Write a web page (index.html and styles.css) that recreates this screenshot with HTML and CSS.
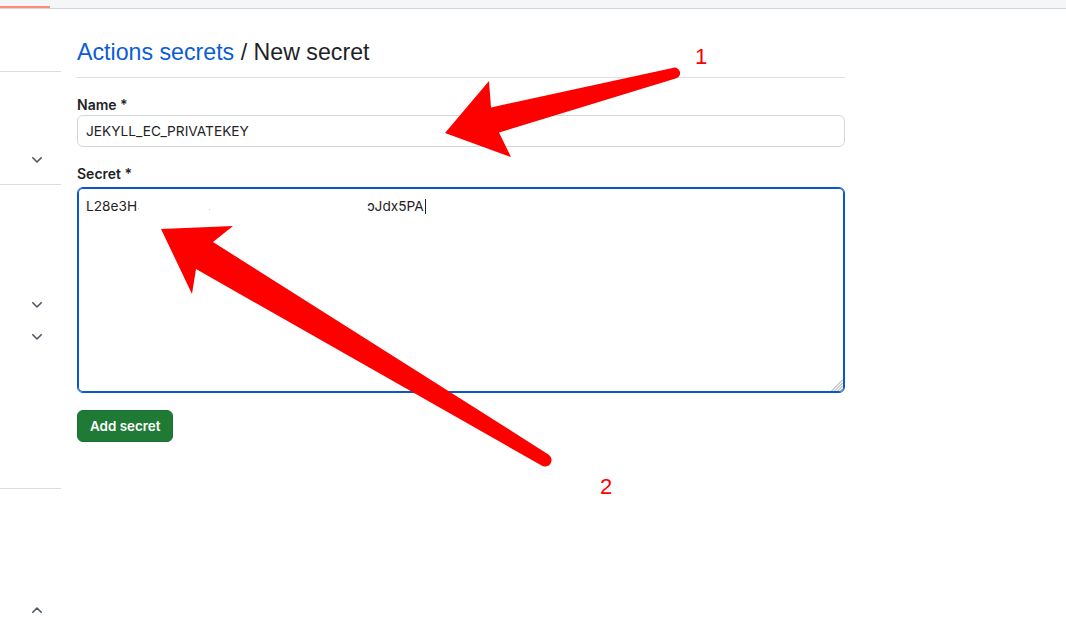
FILE: index.html
```html
<!DOCTYPE html>
<html lang="en">
<head>
<meta charset="utf-8">
<title>Actions secrets / New secret</title>
<link rel="stylesheet" href="styles.css">
</head>
<body>
<header class="topbar"><span class="tab-underline"></span></header>
<div class="layout">
  <nav class="sidebar">
    <div class="side-section side-a"></div>
    <div class="side-section side-b">
      <div class="side-row"><svg class="chev" width="10" height="6" viewBox="0 0 10 6"><path d="M0.8 0.8 L5 5 L9.2 0.8" /></svg></div>
    </div>
    <div class="side-section side-c">
      <div class="side-row"><svg class="chev" width="10" height="6" viewBox="0 0 10 6"><path d="M0.8 0.8 L5 5 L9.2 0.8" /></svg></div>
      <div class="side-row"><svg class="chev" width="10" height="6" viewBox="0 0 10 6"><path d="M0.8 0.8 L5 5 L9.2 0.8" /></svg></div>
    </div>
    <div class="side-section side-d">
      <div class="side-row"><svg class="chev" width="10" height="6" viewBox="0 0 10 6"><path d="M0.8 5.2 L5 1 L9.2 5.2" /></svg></div>
    </div>
  </nav>
  <main class="main">
    <h2 class="page-title"><a href="#" class="crumb">Actions secrets</a> / New secret</h2>
    <form class="secret-form">
      <div class="form-group group-name">
        <label class="form-label" for="secret-name">Name *</label>
        <input id="secret-name" class="form-input" type="text" value="JEKYLL_EC_PRIVATEKEY">
      </div>
      <div class="form-group group-secret">
        <label class="form-label">Secret *</label>
        <div class="form-textarea">
          <span class="secret-part">L28e3H</span><span class="redacted"><i class="speck"></i><i class="speck speck-2"></i></span><span class="secret-part">ɔJdx5PA</span><span class="caret"></span>
          <svg class="grip" width="12" height="12" viewBox="0 0 12 12"><path d="M0.5 12 L12 0.5 M3.5 12 L12 3.5 M6.5 12 L12 6.5 M9.5 12 L12 9.5" /></svg>
        </div>
      </div>
      <button class="btn-primary" type="button">Add secret</button>
    </form>
  </main>
</div>
<svg class="annotations" width="1066" height="617" viewBox="0 0 1066 617">
  <path class="arrow" d="M445 133 L489 81 L491 107.5 L673.6 67.7 A5.5 5.5 0 0 1 676.4 78.3 L499 132.5 L511 157 Z" />
  <path class="arrow" d="M161 229 L233 226 L213 242 L548.4 454.4 A6.5 6.5 0 0 1 541.6 465.6 L196 269 L192 294 Z" />
  <text class="anno-label" x="695" y="64">1</text>
  <text class="anno-label" x="600" y="494">2</text>
</svg>
</body>
</html>
```
FILE: styles.css
```css
* { box-sizing: border-box; }

html, body {
  margin: 0;
  padding: 0;
  background: #ffffff;
}

body {
  font-family: Inter, "Liberation Sans", sans-serif;
  color: #1f2328;
  width: 1066px;
  height: 617px;
  overflow: hidden;
  position: relative;
}

.topbar {
  height: 9px;
  background: #f5f6f8;
  border-bottom: 1px solid #cdd5df;
  display: flex;
  align-items: flex-end;
}

.tab-underline {
  display: block;
  width: 50px;
  height: 2px;
  background: #fd8c73;
}

.layout {
  display: flex;
  align-items: flex-start;
}

.sidebar {
  width: 61px;
  flex: none;
  display: flex;
  flex-direction: column;
}

.side-section {
  border-bottom: 1px solid #d8dee4;
}

.side-a { height: 63px; }
.side-b { height: 113px; padding-top: 72px; }
.side-c { height: 304px; padding-top: 104px; }
.side-d { border-bottom: none; padding-top: 105px; }

.side-row {
  height: 32px;
  display: flex;
  align-items: center;
  justify-content: flex-end;
  padding-right: 19px;
}

.chev path {
  fill: none;
  stroke: #4f5862;
  stroke-width: 1.6;
  stroke-linecap: round;
  stroke-linejoin: round;
}

.main {
  margin-left: 16px;
  width: 768px;
}

.page-title {
  margin: 25px 0 0;
  padding-bottom: 7px;
  font-family: "Liberation Sans", Arial, sans-serif;
  font-size: 23.2px;
  line-height: 36px;
  font-weight: 400;
  color: #1f2328;
  border-bottom: 1px solid #d8dee4;
}

.crumb {
  color: #0b5cd5;
  text-decoration: none;
}

.secret-form {
  margin: 0;
}

.form-group { margin-top: 17px; }
.group-secret { margin-top: 17px; }

.form-label {
  display: block;
  font-size: 14px;
  line-height: 20px;
  font-weight: 600;
  margin: 0;
}

.form-input {
  display: block;
  width: 100%;
  height: 32px;
  margin: 0;
  padding: 5px 8px;
  font-family: Inter, "Liberation Sans", sans-serif;
  font-size: 13.7px;
  line-height: 20px;
  color: #1f2328;
  background: #ffffff;
  border: 1px solid #d0d7de;
  border-radius: 6px;
  outline: none;
}

.form-textarea {
  position: relative;
  height: 206px;
  margin-top: 3px;
  padding: 8px;
  font-size: 13.7px;
  line-height: 20px;
  color: #1f2328;
  border: 1px solid #0b55d0;
  box-shadow: inset 0 0 0 1px #0b55d0;
  border-radius: 6px;
  white-space: nowrap;
}

.redacted {
  display: inline-block;
  width: 230px;
  height: 14px;
  position: relative;
}

.speck {
  position: absolute;
  left: 1px;
  top: 11px;
  width: 1px;
  height: 1px;
  background: #c8c8c8;
}

.speck-2 { left: 72px; top: 12px; }

.caret {
  display: inline-block;
  width: 1px;
  height: 15px;
  margin-left: 1px;
  vertical-align: -3px;
  background: #1f2328;
}

.grip {
  position: absolute;
  right: 1px;
  bottom: 1px;
}

.grip path {
  stroke: #9a9a9a;
  stroke-width: 1;
  fill: none;
}

.btn-primary {
  display: block;
  margin-top: 17px;
  height: 32px;
  padding: 0 12px;
  font-family: Inter, "Liberation Sans", sans-serif;
  font-size: 13.4px;
  font-weight: 600;
  line-height: 20px;
  color: #ffffff;
  background: #1f7a35;
  border: 1px solid #1b6f30;
  border-radius: 6px;
}

.annotations {
  position: absolute;
  left: 0;
  top: 0;
  pointer-events: none;
}

.arrow {
  fill: #fd0000;
}

.anno-label {
  fill: #fd0000;
  font-family: "Liberation Sans", Arial, sans-serif;
  font-size: 22px;
}
```
